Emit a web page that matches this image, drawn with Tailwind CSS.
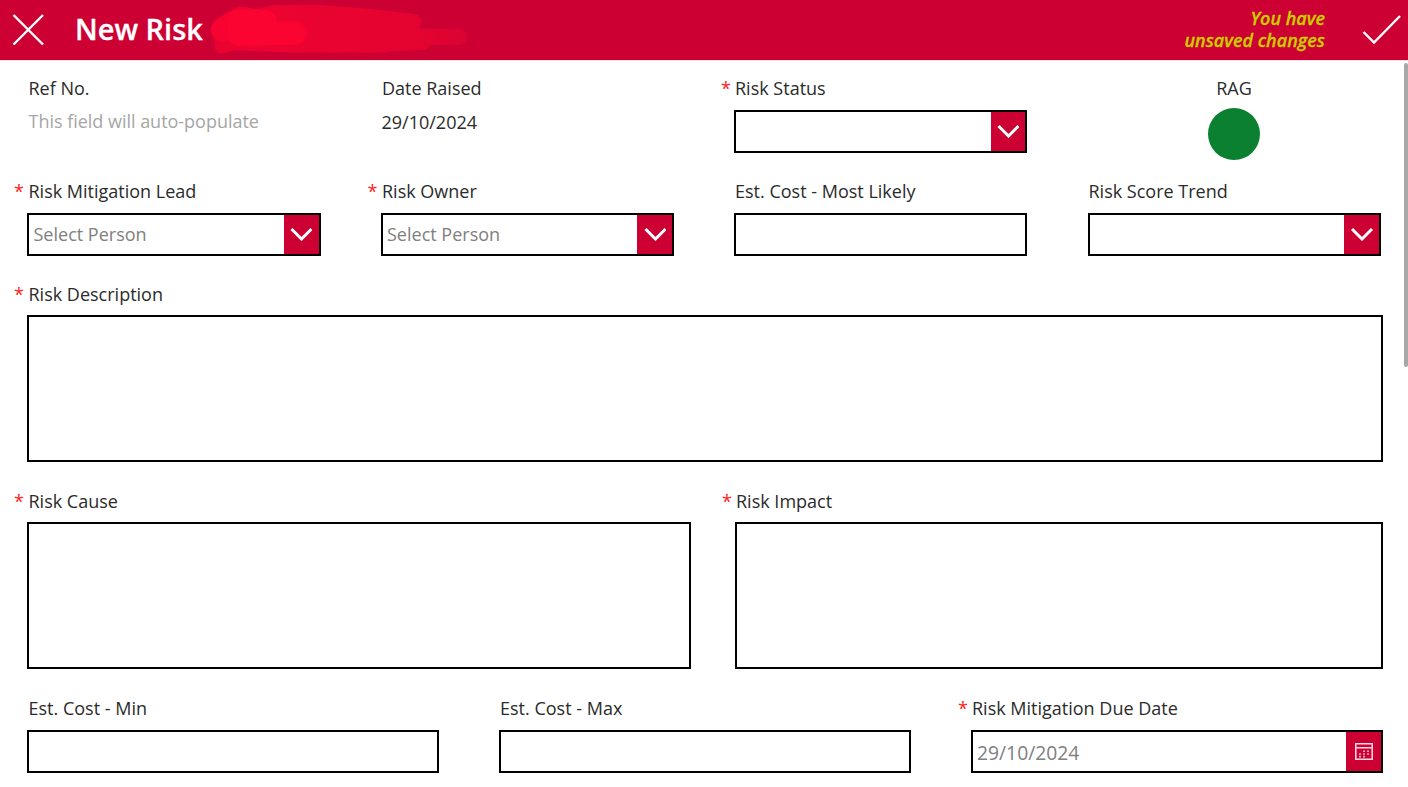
<!DOCTYPE html>
<html lang="en">
<head>
<meta charset="utf-8">
<title>New Risk</title>
<script src="https://cdn.jsdelivr.net/npm/@tailwindcss/browser@4"></script>
</head>
<body class="flex h-screen flex-col overflow-hidden bg-white font-['Open_Sans',sans-serif] text-[18px] font-normal text-[#2b2b2b]">
<header class="flex h-[60px] shrink-0 items-center bg-[#cc0033]">
  <svg class="ml-[12px] h-[32px] w-[32px]" viewBox="0 0 32 32" fill="none" stroke="#fff" stroke-width="2.4"><path d="M1.5 1 31 30.5M31 1 1.5 30.5"/></svg>
  <h1 class="ml-[31px] w-[133px] whitespace-nowrap pb-[2px] text-[29px] font-semibold leading-[58px] text-white [-webkit-text-stroke:0.3px]">New Risk</h1>
  <svg class="h-[60px] w-[262px]" viewBox="208 0 262 60" fill="none" stroke-linecap="round" stroke-linejoin="round">
    <defs>
      <linearGradient id="smear" gradientUnits="userSpaceOnUse" x1="265" y1="0" x2="465" y2="0"><stop offset="0" stop-color="#ec0331"/><stop offset=".75" stop-color="#e50330"/><stop offset="1" stop-color="#da0332"/></linearGradient>
    </defs>
    <path d="M459 37H420" stroke="url(#smear)" stroke-width="16"/>
    <path d="M274 12 320 12 370 16 414 21 412 32 423 43 392 44 385 45.500 290 45.500 230 43 240 20Z" fill="url(#smear)" stroke="url(#smear)" stroke-width="14"/>
    <path d="M218 30 229 20 240 14 268 18V39L224 43Z" fill="#ee0331" stroke="#ee0331" stroke-width="15"/>
    <path d="M222 46 240 41" stroke="#ea0331" stroke-width="15"/>
    <path d="M238 20H267V33H295V34L238 36Z" fill="#fb0431" stroke="#fb0431" stroke-width="20"/>
    <path d="M224 29 240 22M240 33H295" stroke="#fb0431" stroke-opacity=".75" stroke-width="25"/>
  </svg>
  <p class="ml-auto w-[160px] pb-[2px] text-right text-[18px] font-semibold italic leading-[22px] text-[#cccc00] [-webkit-text-stroke:0.3px]">You have<br>unsaved changes</p>
  <svg class="ml-[37px] mr-[7px] h-[32px] w-[39px]" viewBox="1362 14 39 32" fill="none" stroke="#fff" stroke-width="2.4"><path d="M1363.500 32 1374 42.500 1400 16"/></svg>
</header>
<main class="relative flex-1 pl-[27px] pt-[15px]">
  <div class="absolute left-0 right-0 top-0 h-px bg-[#f9dfe6]"></div>
  <div class="absolute right-0 top-[3px] h-[304px] w-[4.5px] rounded-[2px] bg-[#a8a8a8]"></div>

  <section class="flex h-[103px] gap-[60px]">
    <div class="w-[293.5px]">
      <div class="pl-[1.5px] leading-[26px]">Ref No.</div>
      <div class="mt-[7px] pl-[1.5px] leading-[26px] tracking-[-0.02px] text-[#a6a6a6]">This field will auto-populate</div>
    </div>
    <div class="w-[293.5px]">
      <div class="pl-[1.5px] leading-[26px]">Date Raised</div>
      <div class="mt-[8px] pl-[1px] leading-[26px]">29/10/2024</div>
    </div>
    <div class="w-[293.5px]">
      <div class="-ml-[13px] flex leading-[26px]"><span class="w-[14px] text-[#ff2020]">*</span>Risk Status</div>
      <div class="mr-[0.5px] mt-[9px] flex h-[43px] justify-end border-2 border-black">
        <div class="flex w-[34px] items-center justify-center bg-[#cc0033]"><svg class="mb-[1px] h-[14px] w-[22px]" viewBox="0 0 22 14" fill="none" stroke="#fff" stroke-width="3"><path d="M1.500 2 11.500 12 21.500 2"/></svg></div>
      </div>
    </div>
    <div class="flex w-[293px] flex-col items-center">
      <div class="leading-[26px]">RAG</div>
      <div class="mr-[1px] mt-[7px] h-[52px] w-[52px] rounded-full bg-[#0a8030]"></div>
    </div>
  </section>

  <section class="flex h-[103px] gap-[60px]">
    <div class="w-[293.5px]">
      <div class="-ml-[13px] flex leading-[26px]"><span class="w-[14.5px] text-[#ff2020]">*</span>Risk Mitigation Lead</div>
      <div class="mt-[8.5px] flex h-[43.5px] justify-between border-2 border-black">
        <span class="pl-[4.5px] leading-[39px] text-[#808080]">Select Person</span>
        <div class="flex w-[35px] items-center justify-center bg-[#cc0033]"><svg class="h-[14px] w-[22px]" viewBox="0 0 22 14" fill="none" stroke="#fff" stroke-width="3"><path d="M1.500 2 11.500 12 21.500 2"/></svg></div>
      </div>
    </div>
    <div class="w-[293.5px]">
      <div class="-ml-[13px] flex leading-[26px]"><span class="w-[14.5px] text-[#ff2020]">*</span>Risk Owner</div>
      <div class="mt-[8.5px] flex h-[43.5px] justify-between border-2 border-black">
        <span class="pl-[4.5px] leading-[39px] text-[#808080]">Select Person</span>
        <div class="flex w-[35px] items-center justify-center bg-[#cc0033]"><svg class="h-[14px] w-[22px]" viewBox="0 0 22 14" fill="none" stroke="#fff" stroke-width="3"><path d="M1.500 2 11.500 12 21.500 2"/></svg></div>
      </div>
    </div>
    <div class="w-[293.5px]">
      <div class="pl-[1px] leading-[26px]">Est. Cost - Most Likely</div>
      <div class="mr-[0.5px] mt-[8.5px] h-[43.5px] border-2 border-black"></div>
    </div>
    <div class="w-[293.5px]">
      <div class="pl-[1px] leading-[26px]">Risk Score Trend</div>
      <div class="mt-[8.5px] flex h-[43.5px] justify-end border-2 border-black">
        <div class="flex w-[35px] items-center justify-center bg-[#cc0033]"><svg class="h-[14px] w-[22px]" viewBox="0 0 22 14" fill="none" stroke="#fff" stroke-width="3"><path d="M1 2 11 12 21 2"/></svg></div>
      </div>
    </div>
  </section>

  <section class="h-[207px] w-[1356px]">
    <div class="-ml-[13px] flex leading-[26px]"><span class="w-[14.5px] text-[#ff2020]">*</span>Risk Description</div>
    <div class="mt-[8px] h-[147px] border-2 border-black"></div>
  </section>

  <section class="flex h-[207px] gap-[44px]">
    <div class="w-[664px]">
      <div class="-ml-[13px] flex leading-[26px]"><span class="w-[14.5px] text-[#ff2020]">*</span>Risk Cause</div>
      <div class="mt-[8px] h-[147px] border-2 border-black"></div>
    </div>
    <div class="w-[648px]">
      <div class="-ml-[13px] flex leading-[26px]"><span class="w-[14px] text-[#ff2020]">*</span>Risk Impact</div>
      <div class="mt-[8px] h-[147px] border-2 border-black"></div>
    </div>
  </section>

  <section class="flex gap-[60px]">
    <div class="w-[412px]">
      <div class="pl-[1.5px] leading-[26px]">Est. Cost - Min</div>
      <div class="mt-[8.5px] h-[43.5px] border-2 border-black"></div>
    </div>
    <div class="w-[412px]">
      <div class="pl-[1px] leading-[26px]">Est. Cost - Max</div>
      <div class="mt-[8.5px] h-[43.5px] border-2 border-black"></div>
    </div>
    <div class="w-[412px]">
      <div class="-ml-[13px] flex leading-[26px]"><span class="w-[14px] text-[#ff2020]">*</span>Risk Mitigation Due Date</div>
      <div class="mt-[8.5px] flex h-[43.5px] justify-between border-2 border-black">
        <span class="pl-[4px] text-[19.3px] leading-[41px] text-[#808080]">29/10/2024</span>
        <div class="flex w-[35px] items-center justify-center bg-[#cc0033]"><svg class="h-[18px] w-[18px]" viewBox="0 0 18 18" fill="none" stroke="#ffd9e2" stroke-width="1.5"><path d="M.8 1.800H17.200V17.200H.8ZM.8 5.800H17.200"/><path stroke-width="1.600" stroke-dasharray="1.600 2.400" d="M8.200 9.200H15M4.200 12H14M4.200 14.600H10"/></svg></div>
      </div>
    </div>
  </section>
</main>
</body>
</html>
